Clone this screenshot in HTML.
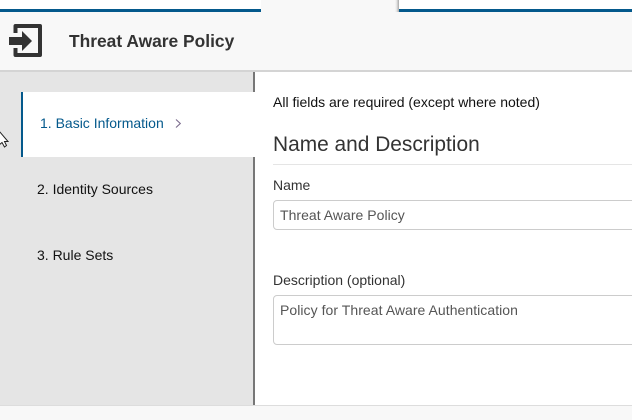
<!DOCTYPE html>
<html><head><meta charset="utf-8"><style>
html,body{margin:0;padding:0;background:#fff}
body{width:632px;height:419px;position:relative;overflow:hidden;font-family:"Liberation Sans",sans-serif;font-size:14px}
div,svg{position:absolute}
.t{white-space:nowrap;line-height:16px}
.box{left:273px;width:370px;box-sizing:border-box;border:1px solid #ccc;border-radius:4px;background:#fff}
</style></head><body>
<div style="left:0;top:9px;width:632px;height:3px;background:#04598c"></div>
<div style="left:261px;top:0;width:138px;height:12px;background:linear-gradient(to right,#f8f8f8 0,#f8f8f8 134px,#e8e8e8 135.5px,#a8a8a8 138px)"></div>
<div style="left:0;top:12px;width:632px;height:58px;background:#f8f8f8"></div>
<div style="left:0;top:70px;width:632px;height:2px;background:#d4d4d4"></div>
<svg style="left:8px;top:23px" width="36" height="36" viewBox="0 0 36 36"><path d="M7.5 10V3H32V32H7.5V25" fill="none" stroke="#333" stroke-width="4" stroke-linejoin="round"/><path d="M1 14H14V8L24 18L14 28V22H1Z" fill="#333"/></svg>
<div class="t" style="left:69px;top:31px;font-size:17.4px;line-height:20px;font-weight:bold;color:#333">Threat Aware Policy</div>
<div style="left:0;top:72px;width:253px;height:333px;background:#e5e5e5"></div>
<div style="left:253px;top:72px;width:2px;height:333px;background:#777"></div>
<div style="left:21px;top:92px;width:236px;height:65px;background:#fff"></div>
<div style="left:21px;top:92px;width:2px;height:65px;background:#04598c"></div>
<div class="t" style="left:40px;top:115px;color:#04598c">1. Basic Information</div>
<svg style="left:174px;top:118px" width="8" height="11" viewBox="0 0 8 11"><path d="M2 1.5L6.3 5.5L2 9.5" fill="none" stroke="#7a6a8c" stroke-width="1.1"/></svg>
<div class="t" style="left:37px;top:181px;color:#111">2. Identity Sources</div>
<div class="t" style="left:37px;top:247px;color:#111">3. Rule Sets</div>
<svg style="left:0;top:130px" width="9" height="18" viewBox="0 0 9 18"><path d="M-1 1L8 11.5H4.5L6.5 15.5L4.5 17L2 12.5L-1 15Z" fill="#fff" stroke="#222" stroke-width="1"/></svg>
<div class="t" style="left:273px;top:94px;color:#111">All fields are required (except where noted)</div>
<div class="t" style="left:273px;top:133px;font-size:20.9px;line-height:24px;color:#333">Name and Description</div>
<div style="left:273px;top:164px;width:359px;height:1px;background:#e5e5e5"></div>
<div class="t" style="left:273px;top:177px;color:#333">Name</div>
<div class="box" style="top:200px;height:30px"></div>
<div class="t" style="left:280px;top:207px;color:#555;letter-spacing:.03px">Threat Aware Policy</div>
<div class="t" style="left:273px;top:272px;color:#333">Description (optional)</div>
<div class="box" style="top:295px;height:50px"></div>
<div class="t" style="left:280px;top:302px;color:#555;letter-spacing:.05px">Policy for Threat Aware Authentication</div>
<div style="left:0;top:405px;width:632px;height:14px;background:#f8f8f8;border-top:1px solid #ddd"></div>
</body></html>
